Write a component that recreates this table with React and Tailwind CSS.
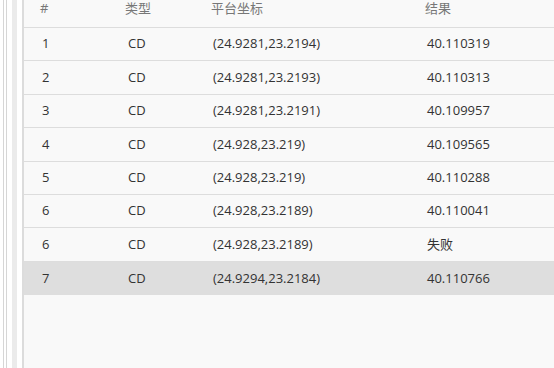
import React from 'react';

const rows = [
  { id: '1', type: 'CD', pos: '(24.9281,23.2194)', result: '40.110319' },
  { id: '2', type: 'CD', pos: '(24.9281,23.2193)', result: '40.110313' },
  { id: '3', type: 'CD', pos: '(24.9281,23.2191)', result: '40.109957' },
  { id: '4', type: 'CD', pos: '(24.928,23.219)', result: '40.109565' },
  { id: '5', type: 'CD', pos: '(24.928,23.219)', result: '40.110288' },
  { id: '6', type: 'CD', pos: '(24.928,23.2189)', result: '40.110041' },
  { id: '6', type: 'CD', pos: '(24.928,23.2189)', result: '失败' },
  { id: '7', type: 'CD', pos: '(24.9294,23.2184)', result: '40.110766', active: true },
];

export default function App() {
  return (
    <div
      className="flex h-[368px] w-[554px] overflow-hidden bg-white text-[13px]"
      style={{ fontFamily: '"Open Sans", "Noto Sans CJK SC", sans-serif' }}
    >
      {/* left frame strips */}
      <div className="ml-[3px] w-px bg-[#d6d6d6]" />
      <div className="ml-[2px] w-px bg-[#d6d6d6]" />
      <div className="ml-[5px] w-[5px] bg-[#ebebeb]" />
      <div className="ml-[5px] w-[2px] bg-[#dcdcdc]" />

      <div className="flex-1 bg-[#f9f9f9]">
        {/* header */}
        <div className="grid h-[28px] grid-cols-[86px_87px_214px_1fr] border-b border-[#dddddd] leading-[17px] text-[#777777]">
          <div className="pl-[16px]">#</div>
          <div className="pl-[15px]">类型</div>
          <div className="pl-[14px]">平台坐标</div>
          <div className="pl-[14px]">结果</div>
        </div>

        {rows.map((r, i) => (
          <div
            key={i}
            className={
              'grid h-[33.4px] grid-cols-[86px_87px_214px_1fr] items-center text-[#333333] ' +
              (r.active ? 'bg-[#dedede]' : 'border-b border-[#dddddd]')
            }
          >
            <div className="pl-[18px]">{r.id}</div>
            <div className="pl-[18px]">{r.type}</div>
            <div className="pl-[16px]">{r.pos}</div>
            <div className="pl-[16px]">{r.result}</div>
          </div>
        ))}
      </div>
    </div>
  );
}
